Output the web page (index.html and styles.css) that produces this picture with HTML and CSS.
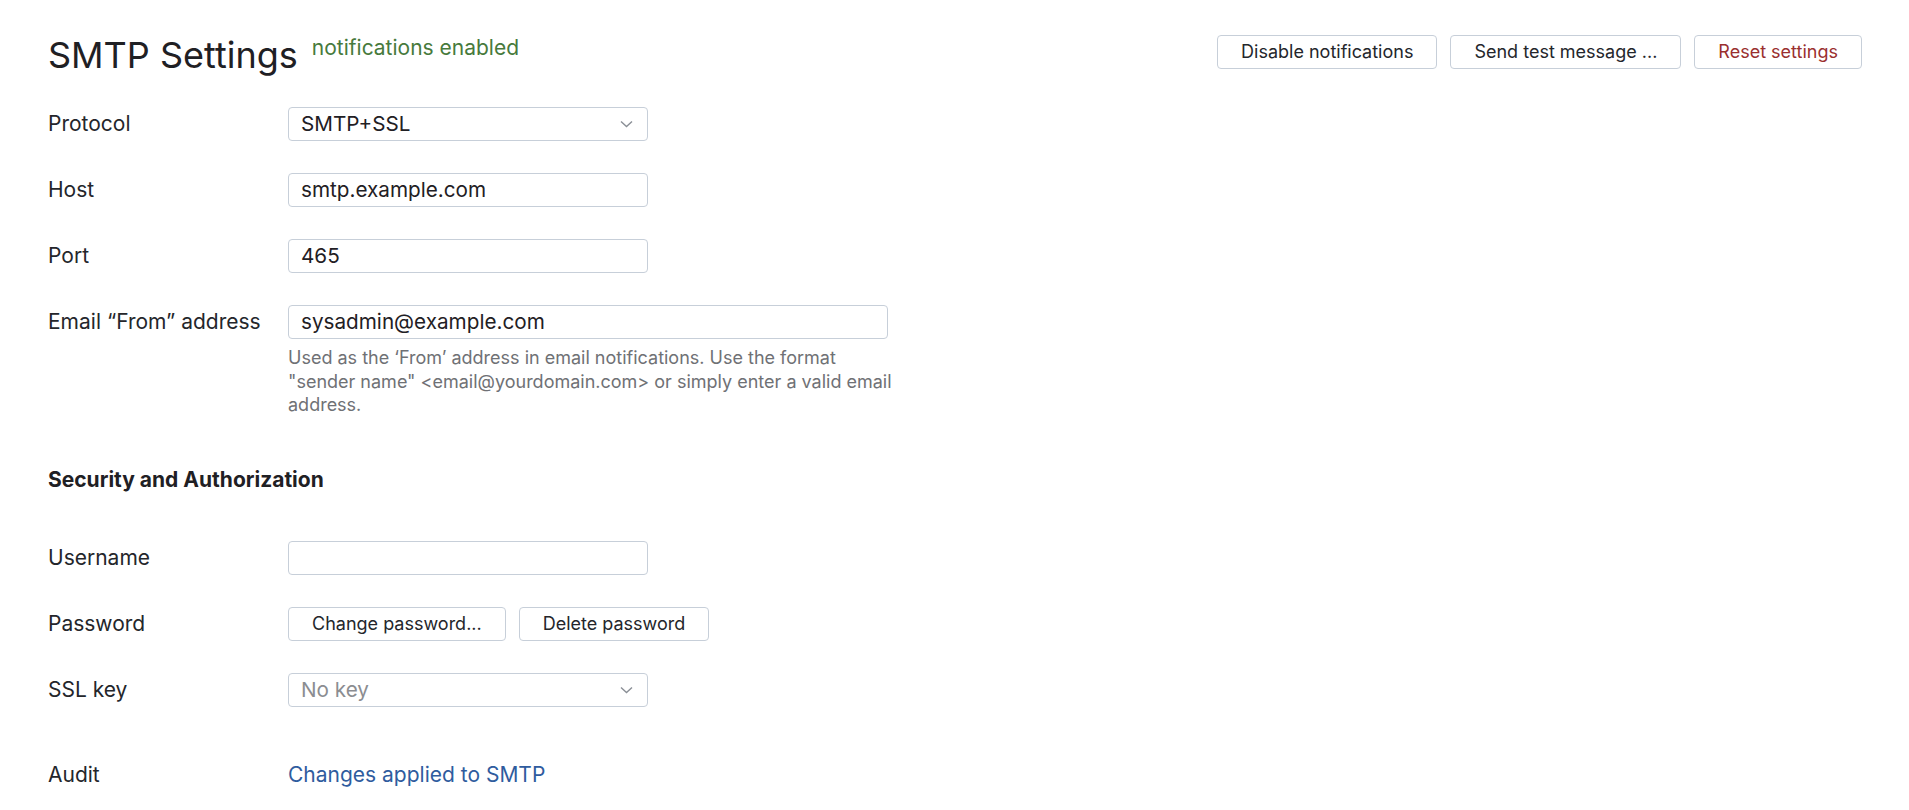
FILE: index.html
```html
<!DOCTYPE html>
<html lang="en">
<head>
<meta charset="utf-8">
<title>SMTP Settings</title>
<link rel="stylesheet" href="styles.css">
</head>
<body>
<div class="page">
  <header class="header">
    <div class="title-group">
      <h1 class="title">SMTP Settings</h1>
      <span class="status">notifications enabled</span>
    </div>
    <div class="actions">
      <button class="btn">Disable notifications</button>
      <button class="btn">Send test message ...</button>
      <button class="btn btn-danger">Reset settings</button>
    </div>
  </header>

  <section class="form">
    <div class="row">
      <label class="label">Protocol</label>
      <div class="control">
        <div class="select">
          <span class="select-value">SMTP+SSL</span>
          <svg class="chevron" width="13" height="8" viewBox="0 0 13 8"><path d="M1 1.5 L6.5 6.5 L12 1.5" fill="none" stroke="#8a8f96" stroke-width="1.4"/></svg>
        </div>
      </div>
    </div>
    <div class="row">
      <label class="label">Host</label>
      <div class="control"><div class="input">smtp.example.com</div></div>
    </div>
    <div class="row">
      <label class="label">Port</label>
      <div class="control"><div class="input">465</div></div>
    </div>
    <div class="row">
      <label class="label">Email “From” address</label>
      <div class="control">
        <div class="input input-wide">sysadmin@example.com</div>
        <p class="help">Used as the ‘From’ address in email notifications. Use the format "sender name" &lt;email@yourdomain.com&gt; or simply enter a valid email address.</p>
      </div>
    </div>
  </section>

  <h2 class="section-title">Security and Authorization</h2>

  <section class="form">
    <div class="row">
      <label class="label">Username</label>
      <div class="control"><div class="input"></div></div>
    </div>
    <div class="row">
      <label class="label">Password</label>
      <div class="control buttons">
        <button class="btn">Change password...</button>
        <button class="btn">Delete password</button>
      </div>
    </div>
    <div class="row">
      <label class="label">SSL key</label>
      <div class="control">
        <div class="select">
          <span class="select-value placeholder">No key</span>
          <svg class="chevron" width="13" height="8" viewBox="0 0 13 8"><path d="M1 1.5 L6.5 6.5 L12 1.5" fill="none" stroke="#8a8f96" stroke-width="1.4"/></svg>
        </div>
      </div>
    </div>
    <div class="row row-audit">
      <label class="label">Audit</label>
      <div class="control"><a class="link" href="#">Changes applied to SMTP</a></div>
    </div>
  </section>
</div>
</body>
</html>
```

FILE: styles.css
```css
* { box-sizing: border-box; }

html, body {
  margin: 0;
  padding: 0;
  background: #ffffff;
}

body {
  font-family: Inter, "Noto Sans", "Liberation Sans", sans-serif;
  color: #222428;
}

.page {
  padding: 35px 47px 0 48px;
}

.header {
  display: flex;
  justify-content: space-between;
  align-items: flex-start;
}

.title-group {
  display: flex;
  align-items: flex-start;
  gap: 14px;
}

.title {
  margin: 0;
  font-size: 36px;
  line-height: 40px;
  font-weight: 400;
  color: #1f2024;
}

.status {
  margin-top: 1px;
  font-size: 21px;
  line-height: 24px;
  color: #477a3c;
}

.actions {
  display: flex;
  gap: 13px;
}

.btn {
  font-family: inherit;
  font-size: 18px;
  line-height: 20px;
  height: 34px;
  padding: 0 23px;
  background: #ffffff;
  border: 1px solid #c7cfd9;
  border-radius: 4px;
  color: #24262b;
  cursor: pointer;
}

.btn-danger {
  color: #9a2f2f;
}

.form {
  display: flex;
  flex-direction: column;
  gap: 32px;
  margin-top: 32px;
}

.row {
  display: flex;
  align-items: flex-start;
}

.label {
  width: 240px;
  flex: none;
  font-size: 21px;
  line-height: 34px;
  color: #24262b;
}

.control {
  display: flex;
  flex-direction: column;
}

.buttons {
  flex-direction: row;
  gap: 13px;
}

.input,
.select {
  width: 360px;
  height: 34px;
  border: 1px solid #c7cfd9;
  border-radius: 4px;
  padding: 0 12px;
  font-size: 20.7px;
  line-height: 32px;
  color: #1f2024;
  background: #ffffff;
}

.input-wide {
  width: 600px;
}

.select {
  display: flex;
  align-items: center;
  justify-content: space-between;
  padding-right: 14px;
}

.placeholder {
  color: #8b8d91;
}

.help {
  margin: 7px 0 0;
  width: 612px;
  font-size: 18px;
  line-height: 23.7px;
  color: #6f7175;
}

.section-title {
  margin: 51px 0 0;
  font-size: 21px;
  line-height: 24px;
  font-weight: 700;
  color: #1f2024;
}

.section-title + .form {
  margin-top: 49px;
}

.row-audit {
  margin-top: 19px;
}

.link {
  font-size: 21px;
  line-height: 34px;
  color: #2f5c9e;
  text-decoration: none;
}
```
